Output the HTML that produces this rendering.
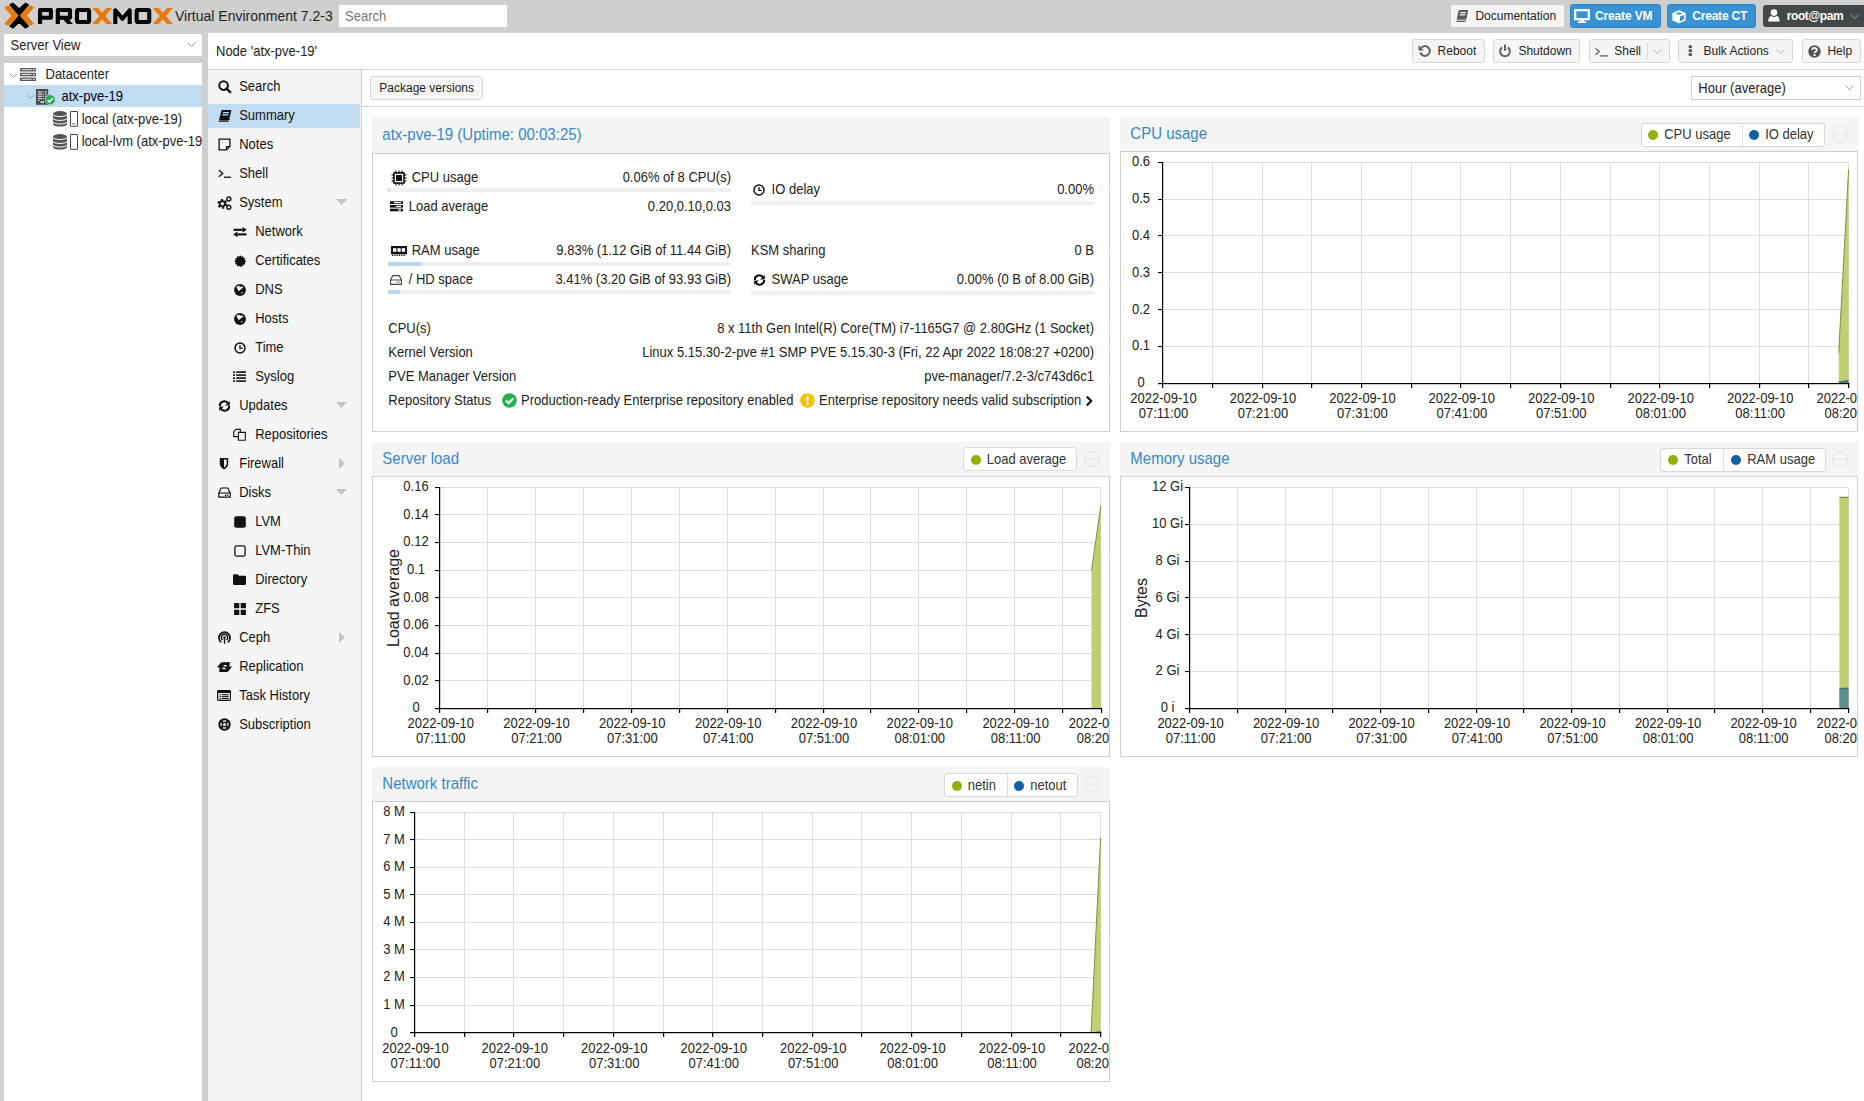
<!DOCTYPE html><html><head><meta charset="utf-8"><style>
html,body{margin:0;padding:0;width:1864px;height:1101px;overflow:hidden;background:#cfcfcf;font-family:"Liberation Sans", sans-serif}
.t{position:absolute;white-space:nowrap;line-height:20px;height:20px}
.r{position:absolute;box-sizing:border-box}
svg.r{overflow:visible}
</style></head><body>
<svg class="r" style="left:0px;top:0px;" width="180" height="34" viewBox="0 0 180 34"><defs><clipPath id="lclip"><rect x="0" y="8" width="180" height="16"/></clipPath></defs><g fill="#e87a0c" stroke="#e87a0c" stroke-width="1.2" stroke-linejoin="round"><polygon points="5.2,7.6 8.5,6.0 18.0,15.6 8.5,25.2 5.2,23.6 12.2,15.6"/><polygon points="33.2,7.6 29.9,6.0 20.4,15.6 29.9,25.2 33.2,23.6 26.2,15.6"/></g><g fill="#000" stroke="#000" stroke-width="1.3" stroke-linejoin="round"><polygon points="10.1,4.9 12.9,3.3 19.2,9.0 25.5,3.3 28.3,4.9 19.2,15.2"/><polygon points="10.1,26.3 12.9,27.9 19.2,22.2 25.5,27.9 28.3,26.3 19.2,16.0"/></g><g fill="none" stroke="#000" stroke-width="4.1" stroke-linejoin="round" clip-path="url(#lclip)"><path d="M40.1,25 V10 H50.9 V17.8 H40.1"/><path d="M57.8,25 V10 H70 V17.8 H57.8 M64.5,17.8 L71.5,25.5"/><rect x="77" y="10" width="12.1" height="12" rx="1.5"/><path d="M115.3,25 V10.2 L122.5,18.8 L129.7,10.2 V25"/><rect x="136.7" y="10" width="12.5" height="12" rx="1.5"/></g><g stroke="#e87a0c" stroke-width="4.4" clip-path="url(#lclip)"><path d="M94.2,7 L110.2,25 M110.2,7 L94.2,25"/><path d="M154.7,7 L171,25 M171,7 L154.7,25"/></g></svg>
<div class="t" style="left:175.00px;top:6.20px;font-size:14px;color:#222;font-weight:normal;transform:scaleY(1.05);">Virtual Environment 7.2-3</div>
<div class="r" style="left:339px;top:5px;width:168px;height:22px;background:#fff;"></div>
<div class="t" style="left:345.00px;top:6.75px;font-size:13px;color:#777;font-weight:normal;transform:scaleY(1.09);">Search</div>
<div class="r" style="left:1451px;top:5px;width:113px;height:22px;background:#f5f5f5;border-radius:2px;"></div>
<svg class="r" style="left:1455px;top:9px;" width="14" height="14" viewBox="0 0 14 14"><g transform="skewX(-12) translate(2.5,0)"><rect x="1.5" y="1" width="9.5" height="12" rx="1" fill="#5a5a5a"/><rect x="3.5" y="3" width="5.5" height="1.3" fill="#f5f5f5"/><rect x="3.5" y="5.2" width="5.5" height="1.3" fill="#f5f5f5"/><path d="M1.5,11.2 H11.6" stroke="#f5f5f5" stroke-width="0.9"/></g></svg>
<div class="t" style="left:1475.40px;top:6.00px;font-size:12px;color:#222;font-weight:normal;">Documentation</div>
<div class="r" style="left:1570px;top:4px;width:91px;height:24px;background:#3892d4;border-radius:3px;border:1px solid #2f86c9;"></div>
<svg class="r" style="left:1574px;top:9px;" width="16" height="14" viewBox="0 0 16 14"><rect x="1.2" y="1.2" width="13.6" height="9" fill="none" stroke="#fff" stroke-width="2.2"/><rect x="6" y="11" width="4" height="1.6" fill="#fff"/><rect x="4" y="12.3" width="8" height="1.6" fill="#fff"/></svg>
<div class="t" style="left:1595.00px;top:6.00px;font-size:12px;color:#fff;font-weight:bold;letter-spacing:-0.15px;">Create VM</div>
<div class="r" style="left:1667px;top:4px;width:89px;height:24px;background:#3892d4;border-radius:3px;border:1px solid #2f86c9;"></div>
<svg class="r" style="left:1671.5px;top:9.8px;" width="14" height="14" viewBox="0 0 14 14"><polygon points="7,0.2 13.6,2.9 13.6,10.4 7,13.2 0.4,10.4 0.4,2.9" fill="#fff"/><polygon points="6.9,2.2 10.6,3.5 6.9,4.8 3.2,3.5" fill="#3892d4"/><polygon points="7.9,6.5 12.1,4.9 12.1,9.5 7.9,11.2" fill="#3892d4"/></svg>
<div class="t" style="left:1692.30px;top:6.00px;font-size:12px;color:#fff;font-weight:bold;letter-spacing:-0.22px;">Create CT</div>
<div class="r" style="left:1763px;top:5px;width:101px;height:22px;background:#42474a;border-radius:3px 0 0 3px;"></div>
<svg class="r" style="left:1768px;top:9px;" width="12" height="13" viewBox="0 0 12 13"><circle cx="6" cy="3.6" r="3.3" fill="#fff"/><path d="M0.3,12.6 C0.3,8.2 2.2,7.3 3.4,7.1 C4.2,7.7 5,8 6,8 C7,8 7.8,7.7 8.6,7.1 C9.8,7.3 11.7,8.2 11.7,12.6 Z" fill="#fff"/></svg>
<div class="t" style="left:1786.70px;top:6.00px;font-size:12px;color:#fff;font-weight:bold;letter-spacing:-0.4px;">root@pam</div>
<svg class="r" style="left:1850px;top:14px;" width="9" height="5" viewBox="0 0 9 5"><path d="M0.5,0.5 L4.5,4.5 L8.5,0.5" fill="none" stroke="#a8a8a8" stroke-width="0.9"/></svg>
<div class="r" style="left:208px;top:33px;width:1656px;height:37px;background:#fff;border-bottom:1px solid #cfcfcf;"></div>
<div class="t" style="left:216.00px;top:41.75px;font-size:13px;color:#222;font-weight:normal;transform:scaleY(1.09);">Node 'atx-pve-19'</div>
<div class="r" style="left:1412px;top:39px;width:73px;height:24px;background:#f5f5f5;border:1px solid #d8d8d8;border-radius:3px;"></div>
<svg class="r" style="left:1418.2px;top:44.2px;" width="13" height="13" viewBox="0 0 13 13"><path d="M2.6,4.6 A4.9,4.9 0 1 1 2.2,8.4" fill="none" stroke="#606060" stroke-width="2"/><path d="M0.4,1.2 L0.6,6.6 L5.9,6.4 Z" fill="#606060"/></svg>
<div class="t" style="left:1437.60px;top:41.00px;font-size:12px;color:#1e1e1e;font-weight:normal;">Reboot</div>
<div class="r" style="left:1493px;top:39px;width:87px;height:24px;background:#f5f5f5;border:1px solid #d8d8d8;border-radius:3px;"></div>
<svg class="r" style="left:1499px;top:44.2px;" width="12" height="13" viewBox="0 0 12 13"><path d="M3.2,3.4 A4.9,4.9 0 1 0 8.8,3.4" fill="none" stroke="#606060" stroke-width="2"/><path d="M6,0.5 V6.8" stroke="#606060" stroke-width="2"/></svg>
<div class="t" style="left:1518.40px;top:41.00px;font-size:12px;color:#1e1e1e;font-weight:normal;">Shutdown</div>
<div class="r" style="left:1589px;top:39px;width:81px;height:24px;background:#f5f5f5;border:1px solid #d8d8d8;border-radius:3px;"></div>
<svg class="r" style="left:1594.5px;top:46px;" width="14" height="11" viewBox="0 0 14 11"><path d="M0.4,2.4 L4.2,5.6 L0.4,8.8" fill="none" stroke="#555" stroke-width="1.2"/><path d="M4.8,9.9 H13" stroke="#555" stroke-width="1.2"/></svg>
<div class="t" style="left:1614.30px;top:41.00px;font-size:12px;color:#1e1e1e;font-weight:normal;">Shell</div>
<div class="r" style="left:1647px;top:43px;width:1px;height:16px;background:#dcdcdc;"></div>
<svg class="r" style="left:1653px;top:49px;" width="9" height="5" viewBox="0 0 9 5"><path d="M0.5,0.5 L4.5,4.5 L8.5,0.5" fill="none" stroke="#b0b0b0" stroke-width="0.9"/></svg>
<div class="r" style="left:1678px;top:39px;width:115px;height:24px;background:#f5f5f5;border:1px solid #d8d8d8;border-radius:3px;"></div>
<svg class="r" style="left:1687.5px;top:45px;" width="5" height="12" viewBox="0 0 5 12"><rect x="0.7" y="0.4" width="3.2" height="2.8" fill="#555"/><rect x="0.7" y="4.3" width="3.2" height="2.8" fill="#555"/><rect x="0.7" y="8.2" width="3.2" height="2.8" fill="#555"/></svg>
<div class="t" style="left:1703.50px;top:41.00px;font-size:12px;color:#1e1e1e;font-weight:normal;">Bulk Actions</div>
<svg class="r" style="left:1776px;top:49px;" width="9" height="5" viewBox="0 0 9 5"><path d="M0.5,0.5 L4.5,4.5 L8.5,0.5" fill="none" stroke="#b0b0b0" stroke-width="0.9"/></svg>
<div class="r" style="left:1802px;top:39px;width:59px;height:24px;background:#f5f5f5;border:1px solid #d8d8d8;border-radius:3px;"></div>
<svg class="r" style="left:1807.5px;top:44.8px;" width="13" height="13" viewBox="0 0 13 13"><circle cx="6.5" cy="6.5" r="6.2" fill="#555"/><path d="M4.3,5 C4.3,2.3 8.8,2.3 8.8,4.9 C8.8,6.5 6.6,6.6 6.6,8" fill="none" stroke="#fff" stroke-width="1.8"/><rect x="5.6" y="9.1" width="2" height="1.9" fill="#fff"/></svg>
<div class="t" style="left:1827.40px;top:41.00px;font-size:12px;color:#1e1e1e;font-weight:normal;">Help</div>
<div class="r" style="left:4px;top:34px;width:198px;height:22px;background:#fff;"></div>
<div class="t" style="left:10.50px;top:35.55px;font-size:13px;color:#222;font-weight:normal;transform:scaleY(1.09);">Server View</div>
<svg class="r" style="left:186.5px;top:42px;" width="9" height="5" viewBox="0 0 9 5"><path d="M0.5,0.5 L4.5,4.5 L8.5,0.5" fill="none" stroke="#8a8a8a" stroke-width="0.9"/></svg>
<div class="r" style="left:4px;top:63px;width:198px;height:1038px;background:#fff;"></div>
<div class="r" style="left:4px;top:85px;width:198px;height:22px;background:#c2ddf2;"></div>
<svg class="r" style="left:9px;top:72.5px;" width="9" height="5" viewBox="0 0 9 5"><path d="M0.5,0.5 L4.5,4.5 L8.5,0.5" fill="none" stroke="#a0a0a0" stroke-width="0.9"/></svg>
<svg class="r" style="left:25.5px;top:94px;" width="9" height="5" viewBox="0 0 9 5"><path d="M0.5,0.5 L4.5,4.5 L8.5,0.5" fill="none" stroke="#8a9aa8" stroke-width="0.9"/></svg>
<svg class="r" style="left:20px;top:68px;" width="16" height="13" viewBox="0 0 16 13"><rect x="0" y="0" width="16" height="3.4" rx="0.6" fill="#5a5a5a"/><rect x="1.6" y="1.1" width="10" height="1.1" fill="#ddd"/><rect x="13" y="1.0" width="1.6" height="1.3" fill="#eee"/><rect x="0" y="4.8" width="16" height="3.4" rx="0.6" fill="#5a5a5a"/><rect x="1.6" y="5.9" width="10" height="1.1" fill="#ddd"/><rect x="13" y="5.8" width="1.6" height="1.3" fill="#eee"/><rect x="0" y="9.6" width="16" height="3.4" rx="0.6" fill="#5a5a5a"/><rect x="1.6" y="10.7" width="10" height="1.1" fill="#ddd"/><rect x="13" y="10.6" width="1.6" height="1.3" fill="#eee"/></svg>
<div class="t" style="left:45.50px;top:65.15px;font-size:13px;color:#222;font-weight:normal;transform:scaleY(1.09);">Datacenter</div>
<svg class="r" style="left:36px;top:89px;" width="21" height="17" viewBox="0 0 21 17"><rect x="0" y="0" width="12.2" height="15.8" fill="#4a4a4a"/><rect x="1.9" y="2.4" width="4" height="1.2" fill="#d5dbe0"/><rect x="6.6" y="2.4" width="1.3" height="1.2" fill="#d5dbe0"/><rect x="9" y="2.4" width="1.8" height="1.2" fill="#d5dbe0"/><rect x="1.9" y="4.6" width="4" height="1.2" fill="#d5dbe0"/><rect x="6.6" y="4.6" width="1.3" height="1.2" fill="#d5dbe0"/><rect x="9" y="4.6" width="1.8" height="1.2" fill="#d5dbe0"/><rect x="1.9" y="6.7" width="4" height="1.2" fill="#d5dbe0"/><rect x="6.6" y="6.7" width="1.3" height="1.2" fill="#d5dbe0"/><rect x="9" y="6.7" width="1.8" height="1.2" fill="#d5dbe0"/><rect x="1.9" y="8.9" width="4" height="1.2" fill="#d5dbe0"/><rect x="6.6" y="8.9" width="1.3" height="1.2" fill="#d5dbe0"/><rect x="9" y="8.9" width="1.8" height="1.2" fill="#d5dbe0"/><rect x="1.9" y="10.9" width="1.5" height="1.2" fill="#d5dbe0"/><rect x="4.6" y="12.3" width="3.4" height="1.7" fill="#e0e6ea"/><circle cx="14.2" cy="10.8" r="5.1" fill="#21b24b" stroke="#c2ddf2" stroke-width="0.7"/><path d="M11.7,11 L13.6,12.8 L16.8,9.3" fill="none" stroke="#fff" stroke-width="1.6"/></svg>
<div class="t" style="left:61.50px;top:86.55px;font-size:13px;color:#001;font-weight:normal;transform:scaleY(1.09);">atx-pve-19</div>
<svg class="r" style="left:53.2px;top:111.2px;" width="14" height="16" viewBox="0 0 14 16"><path d="M0,2.8 V13 C0,16.4 14,16.4 14,13 V2.8 Z" fill="#555"/><ellipse cx="7" cy="2.8" rx="7" ry="2.7" fill="#555"/><path d="M0,3.4 C0,6.2 14,6.2 14,3.4 M0,7.3 C0,10.1 14,10.1 14,7.3 M0,10.9 C0,13.7 14,13.7 14,10.9" fill="none" stroke="#fff" stroke-width="1.0"/></svg>
<svg class="r" style="left:53.2px;top:133.5px;" width="14" height="16" viewBox="0 0 14 16"><path d="M0,2.8 V13 C0,16.4 14,16.4 14,13 V2.8 Z" fill="#555"/><ellipse cx="7" cy="2.8" rx="7" ry="2.7" fill="#555"/><path d="M0,3.4 C0,6.2 14,6.2 14,3.4 M0,7.3 C0,10.1 14,10.1 14,7.3 M0,10.9 C0,13.7 14,13.7 14,10.9" fill="none" stroke="#fff" stroke-width="1.0"/></svg>
<svg class="r" style="left:70px;top:111.3px;" width="8" height="16" viewBox="0 0 8 16"><rect x="0.5" y="0.5" width="7" height="14.8" rx="0.4" fill="none" stroke="#444" stroke-width="1"/><path d="M2.4,12.9 H5.2" stroke="#444" stroke-width="0.9"/></svg>
<svg class="r" style="left:70px;top:133.6px;" width="8" height="16" viewBox="0 0 8 16"><rect x="0.5" y="0.5" width="7" height="14.8" rx="0.4" fill="none" stroke="#444" stroke-width="1"/></svg>
<div class="t" style="left:81.70px;top:110.25px;font-size:13px;color:#222;font-weight:normal;transform:scaleY(1.09);">local (atx-pve-19)</div>
<div class="r" style="left:81.7px;top:132.4px;width:120px;height:20px;overflow:hidden"><div class="t" style="left:0;top:0;font-size:13px;color:#222;transform:scaleY(1.09)">local-lvm (atx-pve-19)</div></div>
<div class="r" style="left:208px;top:70px;width:154px;height:1031px;background:#f5f5f5;border-right:1px solid #cfcfcf;"></div>
<div class="r" style="left:208px;top:104px;width:152px;height:24px;background:#c2ddf2;"></div>
<svg class="r" style="left:217.5px;top:80.3px;" width="13" height="13" viewBox="0 0 13 13"><circle cx="5.6" cy="5.6" r="4.3" fill="none" stroke="#111" stroke-width="2"/><path d="M8.6,8.6 L12.2,12.2" stroke="#111" stroke-width="2.4" stroke-linecap="round"/></svg>
<div class="t" style="left:239.20px;top:76.85px;font-size:13px;color:#111;font-weight:normal;transform:scaleY(1.09);">Search</div>
<svg class="r" style="left:217.5px;top:109.3px;" width="13" height="13" viewBox="0 0 13 13"><g transform="skewX(-14) translate(2.8,0)"><rect x="1" y="1" width="10" height="10.5" rx="0.8" fill="#111"/><rect x="3" y="3" width="6" height="1.3" fill="#c2ddf2"/><rect x="3" y="5.2" width="6" height="1.3" fill="#c2ddf2"/><path d="M1,10.4 H11.5 M1,12.2 H11" stroke="#111" stroke-width="0.9"/></g></svg>
<div class="t" style="left:239.20px;top:105.85px;font-size:13px;color:#111;font-weight:normal;transform:scaleY(1.09);">Summary</div>
<svg class="r" style="left:217.5px;top:138.3px;" width="13" height="13" viewBox="0 0 13 13"><path d="M1.1,1.1 H11.9 V8.4 L8.4,11.9 H1.1 Z" fill="none" stroke="#111" stroke-width="1.3"/><path d="M8.4,11.9 V8.6 H11.9" fill="none" stroke="#111" stroke-width="1.1"/></svg>
<div class="t" style="left:239.20px;top:134.85px;font-size:13px;color:#111;font-weight:normal;transform:scaleY(1.09);">Notes</div>
<svg class="r" style="left:217.5px;top:169.3px;" width="13" height="9" viewBox="0 0 13 9"><path d="M0.8,1 L4.8,4.4 L0.8,7.8" fill="none" stroke="#111" stroke-width="1.3"/><path d="M6,8.2 H13" stroke="#111" stroke-width="1.3"/></svg>
<div class="t" style="left:239.20px;top:163.85px;font-size:13px;color:#111;font-weight:normal;transform:scaleY(1.09);">Shell</div>
<svg class="r" style="left:216.5px;top:195.8px;" width="15" height="14" viewBox="0 0 15 14"><circle cx="5.3" cy="7.8" r="3.6" fill="none" stroke="#111" stroke-width="2.6" stroke-dasharray="1.9,1.9"/><circle cx="5.3" cy="7.8" r="2.6" fill="none" stroke="#111" stroke-width="1.8"/><circle cx="11.8" cy="3" r="2" fill="none" stroke="#111" stroke-width="1.4"/><circle cx="11.8" cy="11.3" r="2" fill="none" stroke="#111" stroke-width="1.4"/></svg>
<div class="t" style="left:239.20px;top:192.85px;font-size:13px;color:#111;font-weight:normal;transform:scaleY(1.09);">System</div>
<svg class="r" style="left:232.5px;top:226.8px;" width="14" height="10" viewBox="0 0 14 10"><path d="M0.5,2.8 H10.5" stroke="#111" stroke-width="2.1"/><path d="M9.6,0 L13.8,2.8 L9.6,5.6 Z" fill="#111"/><path d="M3.5,7.4 H13.5" stroke="#111" stroke-width="2.1"/><path d="M4.4,4.6 L0.2,7.4 L4.4,10.2 Z" fill="#111"/></svg>
<div class="t" style="left:255.20px;top:221.85px;font-size:13px;color:#111;font-weight:normal;transform:scaleY(1.09);">Network</div>
<svg class="r" style="left:233.5px;top:254.8px;" width="12" height="12" viewBox="0 0 12 12"><polygon points="6.20,0.20 7.39,1.76 9.20,1.00 9.45,2.95 11.40,3.20 10.64,5.01 12.20,6.20 10.64,7.39 11.40,9.20 9.45,9.45 9.20,11.40 7.39,10.64 6.20,12.20 5.01,10.64 3.20,11.40 2.95,9.45 1.00,9.20 1.76,7.39 0.20,6.20 1.76,5.01 1.00,3.20 2.95,2.95 3.20,1.00 5.01,1.76" fill="#111"/></svg>
<div class="t" style="left:255.20px;top:250.85px;font-size:13px;color:#111;font-weight:normal;transform:scaleY(1.09);">Certificates</div>
<svg class="r" style="left:233.5px;top:283.8px;" width="12" height="12" viewBox="0 0 12 12"><circle cx="6" cy="6" r="5.9" fill="#111"/><polygon points="2.2,2.8 5.0,1.5 6.4,2.3 9.7,3.1 4.8,7.3" fill="#f5f5f5"/><circle cx="6.2" cy="2.0" r="0.75" fill="#111"/><polygon points="6.4,9.3 9.0,7.8 8.3,9.6" fill="#f5f5f5"/></svg>
<div class="t" style="left:255.20px;top:279.85px;font-size:13px;color:#111;font-weight:normal;transform:scaleY(1.09);">DNS</div>
<svg class="r" style="left:233.5px;top:312.8px;" width="12" height="12" viewBox="0 0 12 12"><circle cx="6" cy="6" r="5.9" fill="#111"/><polygon points="2.2,2.8 5.0,1.5 6.4,2.3 9.7,3.1 4.8,7.3" fill="#f5f5f5"/><circle cx="6.2" cy="2.0" r="0.75" fill="#111"/><polygon points="6.4,9.3 9.0,7.8 8.3,9.6" fill="#f5f5f5"/></svg>
<div class="t" style="left:255.20px;top:308.85px;font-size:13px;color:#111;font-weight:normal;transform:scaleY(1.09);">Hosts</div>
<svg class="r" style="left:233.5px;top:341.8px;" width="12" height="12" viewBox="0 0 12 12"><circle cx="6" cy="6" r="5" fill="none" stroke="#111" stroke-width="1.5"/><path d="M6,3 V6.4 H8.6" fill="none" stroke="#111" stroke-width="1.3"/></svg>
<div class="t" style="left:255.20px;top:337.85px;font-size:13px;color:#111;font-weight:normal;transform:scaleY(1.09);">Time</div>
<svg class="r" style="left:233.0px;top:371.3px;" width="13" height="11" viewBox="0 0 13 11"><rect x="0" y="0.3" width="2" height="1.6" fill="#111"/><rect x="3.2" y="0.3" width="9.8" height="1.6" fill="#111"/><rect x="0" y="3.3" width="2" height="1.6" fill="#111"/><rect x="3.2" y="3.3" width="9.8" height="1.6" fill="#111"/><rect x="0" y="6.3" width="2" height="1.6" fill="#111"/><rect x="3.2" y="6.3" width="9.8" height="1.6" fill="#111"/><rect x="0" y="9.3" width="2" height="1.6" fill="#111"/><rect x="3.2" y="9.3" width="9.8" height="1.6" fill="#111"/></svg>
<div class="t" style="left:255.20px;top:366.85px;font-size:13px;color:#111;font-weight:normal;transform:scaleY(1.09);">Syslog</div>
<svg class="r" style="left:217.5px;top:399.8px;" width="13" height="12" viewBox="0 0 13 12"><path d="M1.8,6 A4.5,4.5 0 0 1 10.2,3.6" fill="none" stroke="#111" stroke-width="2"/><path d="M11.8,1 V5.6 H7.2 Z" fill="#111"/><path d="M11.2,6 A4.5,4.5 0 0 1 2.8,8.4" fill="none" stroke="#111" stroke-width="2"/><path d="M1.2,11 V6.4 H5.8 Z" fill="#111"/></svg>
<div class="t" style="left:239.20px;top:395.85px;font-size:13px;color:#111;font-weight:normal;transform:scaleY(1.09);">Updates</div>
<svg class="r" style="left:233.0px;top:428.3px;" width="13" height="13" viewBox="0 0 13 13"><path d="M0.7,3.7 L3,1.4 H7.3 V8.6 H0.7 Z" fill="none" stroke="#111" stroke-width="1.1"/><path d="M5.4,4.4 H12.3 V12.3 H5.4 Z" fill="#f5f5f5" stroke="#111" stroke-width="1.1"/></svg>
<div class="t" style="left:255.20px;top:424.85px;font-size:13px;color:#111;font-weight:normal;transform:scaleY(1.09);">Repositories</div>
<svg class="r" style="left:219.0px;top:457.3px;" width="10" height="13" viewBox="0 0 10 13"><path d="M0.8,1 H9.2 V6.5 C9.2,9.5 7,11.3 5,12.4 C3,11.3 0.8,9.5 0.8,6.5 Z" fill="#111"/><path d="M5,2.6 H7.6 V6.5 C7.6,8.4 6.4,9.6 5,10.4 Z" fill="#f5f5f5"/></svg>
<div class="t" style="left:239.20px;top:453.85px;font-size:13px;color:#111;font-weight:normal;transform:scaleY(1.09);">Firewall</div>
<svg class="r" style="left:217.5px;top:487.3px;" width="13" height="11" viewBox="0 0 13 11"><path d="M0.8,6 L3.2,1 H9.8 L12.2,6 V10.2 H0.8 Z" fill="none" stroke="#111" stroke-width="1.2"/><path d="M0.8,6 H12.2" stroke="#111" stroke-width="1.1"/><circle cx="9.6" cy="8.2" r="0.8" fill="#111"/><circle cx="7.6" cy="8.2" r="0.8" fill="#111"/></svg>
<div class="t" style="left:239.20px;top:482.85px;font-size:13px;color:#111;font-weight:normal;transform:scaleY(1.09);">Disks</div>
<svg class="r" style="left:233.5px;top:515.8px;" width="12" height="12" viewBox="0 0 12 12"><rect x="0.2" y="0.2" width="11.6" height="11.6" rx="1.8" fill="#111"/></svg>
<div class="t" style="left:255.20px;top:511.85px;font-size:13px;color:#111;font-weight:normal;transform:scaleY(1.09);">LVM</div>
<svg class="r" style="left:233.5px;top:544.8px;" width="12" height="12" viewBox="0 0 12 12"><rect x="0.9" y="0.9" width="10.2" height="10.2" rx="1.6" fill="none" stroke="#111" stroke-width="1.3"/></svg>
<div class="t" style="left:255.20px;top:540.85px;font-size:13px;color:#111;font-weight:normal;transform:scaleY(1.09);">LVM-Thin</div>
<svg class="r" style="left:233.0px;top:574.3px;" width="13" height="11" viewBox="0 0 13 11"><path d="M0,1.5 C0,0.8 0.5,0.3 1.2,0.3 H4.6 L6,1.8 H11.8 C12.5,1.8 13,2.3 13,3 V9.8 C13,10.5 12.5,11 11.8,11 H1.2 C0.5,11 0,10.5 0,9.8 Z" fill="#111"/></svg>
<div class="t" style="left:255.20px;top:569.85px;font-size:13px;color:#111;font-weight:normal;transform:scaleY(1.09);">Directory</div>
<svg class="r" style="left:233.5px;top:602.8px;" width="12" height="12" viewBox="0 0 12 12"><rect x="0" y="0" width="5.3" height="5.3" rx="0.6" fill="#111"/><rect x="6.7" y="0" width="5.3" height="5.3" rx="0.6" fill="#111"/><rect x="0" y="6.7" width="5.3" height="5.3" rx="0.6" fill="#111"/><rect x="6.7" y="6.7" width="5.3" height="5.3" rx="0.6" fill="#111"/></svg>
<div class="t" style="left:255.20px;top:598.85px;font-size:13px;color:#111;font-weight:normal;transform:scaleY(1.09);">ZFS</div>
<svg class="r" style="left:217.5px;top:631.3px;" width="13" height="13" viewBox="0 0 13 13"><path d="M3.3,11.4 A5.6,5.6 0 1 1 9.7,11.4" fill="none" stroke="#111" stroke-width="1.7"/><path d="M4.6,9 A3.2,3.2 0 1 1 8.4,9" fill="none" stroke="#111" stroke-width="1.5"/><circle cx="6.5" cy="6.6" r="1.3" fill="#111"/><path d="M6.5,7.6 V12.8" stroke="#111" stroke-width="1.3"/></svg>
<div class="t" style="left:239.20px;top:627.85px;font-size:13px;color:#111;font-weight:normal;transform:scaleY(1.09);">Ceph</div>
<svg class="r" style="left:216.5px;top:661.8px;" width="15" height="10" viewBox="0 0 15 10"><polygon points="0,5.5 4,0.2 8,5.5" fill="#111"/><rect x="2.6" y="5" width="2.8" height="5" fill="#111"/><rect x="2.6" y="7.2" width="8" height="2.8" fill="#111"/><rect x="5" y="0.2" width="7.5" height="2.8" fill="#111"/><rect x="9.6" y="0.2" width="2.8" height="4.6" fill="#111"/><polygon points="7,4.4 11,9.8 15,4.4" fill="#111"/></svg>
<div class="t" style="left:239.20px;top:656.85px;font-size:13px;color:#111;font-weight:normal;transform:scaleY(1.09);">Replication</div>
<svg class="r" style="left:217.0px;top:690.3px;" width="14" height="11" viewBox="0 0 14 11"><rect x="0.6" y="0.6" width="12.8" height="9.8" rx="0.8" fill="none" stroke="#111" stroke-width="1.2"/><rect x="0.6" y="0.6" width="12.8" height="2.4" fill="#111"/><rect x="2.4" y="4.2" width="1.4" height="1.1" fill="#111"/><rect x="4.6" y="4.2" width="7" height="1.1" fill="#111"/><rect x="2.4" y="6.1" width="1.4" height="1.1" fill="#111"/><rect x="4.6" y="6.1" width="7" height="1.1" fill="#111"/><rect x="2.4" y="8" width="1.4" height="1.1" fill="#111"/><rect x="4.6" y="8" width="7" height="1.1" fill="#111"/></svg>
<div class="t" style="left:239.20px;top:685.85px;font-size:13px;color:#111;font-weight:normal;transform:scaleY(1.09);">Task History</div>
<svg class="r" style="left:217.5px;top:718.3px;" width="13" height="13" viewBox="0 0 13 13"><circle cx="6.5" cy="6.5" r="5.2" fill="none" stroke="#111" stroke-width="2"/><circle cx="6.5" cy="6.5" r="2.2" fill="none" stroke="#111" stroke-width="1.2"/><path d="M2.8,2.8 L4.9,4.9 M10.2,2.8 L8.1,4.9 M2.8,10.2 L4.9,8.1 M10.2,10.2 L8.1,8.1" stroke="#111" stroke-width="2.2"/></svg>
<div class="t" style="left:239.20px;top:714.85px;font-size:13px;color:#111;font-weight:normal;transform:scaleY(1.09);">Subscription</div>
<svg class="r" style="left:336px;top:199.3px;" width="11" height="6" viewBox="0 0 11 6"><path d="M0,0 H11 L5.5,6 Z" fill="#c4c4c4"/></svg>
<svg class="r" style="left:336px;top:402.3px;" width="11" height="6" viewBox="0 0 11 6"><path d="M0,0 H11 L5.5,6 Z" fill="#c4c4c4"/></svg>
<svg class="r" style="left:336px;top:489.3px;" width="11" height="6" viewBox="0 0 11 6"><path d="M0,0 H11 L5.5,6 Z" fill="#c4c4c4"/></svg>
<svg class="r" style="left:339px;top:457.8px;" width="6" height="11" viewBox="0 0 6 11"><path d="M0,0 V11 L6,5.5 Z" fill="#c4c4c4"/></svg>
<svg class="r" style="left:339px;top:631.8px;" width="6" height="11" viewBox="0 0 6 11"><path d="M0,0 V11 L6,5.5 Z" fill="#c4c4c4"/></svg>
<div class="r" style="left:362px;top:70px;width:1502px;height:1031px;background:#fff;"></div>
<div class="r" style="left:362px;top:106px;width:1502px;height:1px;background:#cfcfcf;"></div>
<div class="r" style="left:370px;top:76px;width:113px;height:24px;background:#f5f5f5;border:1px solid #d8d8d8;border-radius:3px;"></div>
<div class="t" style="left:379.30px;top:77.80px;font-size:12px;color:#1e1e1e;font-weight:normal;">Package versions</div>
<div class="r" style="left:1691px;top:76px;width:170px;height:24px;background:#fff;border:1px solid #d0d0d0;"></div>
<div class="t" style="left:1698.30px;top:79.35px;font-size:13px;color:#222;font-weight:normal;transform:scaleY(1.09);">Hour (average)</div>
<svg class="r" style="left:1845px;top:84.8px;" width="9" height="5" viewBox="0 0 9 5"><path d="M0.5,0.5 L4.5,4.5 L8.5,0.5" fill="none" stroke="#9a9a9a" stroke-width="0.9"/></svg>
<div class="r" style="left:372px;top:117px;width:738px;height:36px;background:#f5f5f5;"></div>
<div class="r" style="left:372px;top:153px;width:738px;height:279px;background:#fff;border:1px solid #cfcfcf;"></div>
<div class="t" style="left:382.30px;top:124.50px;font-size:15px;color:#3588c8;font-weight:normal;transform:scaleY(1.06);">atx-pve-19 (Uptime: 00:03:25)</div>
<svg class="r" style="left:390.5px;top:169.5px;" width="16" height="16" viewBox="0 0 16 16"><rect x="3" y="3" width="10" height="10" fill="none" stroke="#111" stroke-width="1.6"/><rect x="5" y="5" width="6" height="6" fill="#111"/><rect x="4.4" y="0.6" width="1.2" height="2.4" fill="#111"/><rect x="4.4" y="13" width="1.2" height="2.4" fill="#111"/><rect x="0.6" y="4.4" width="2.4" height="1.2" fill="#111"/><rect x="13" y="4.4" width="2.4" height="1.2" fill="#111"/><rect x="7.4" y="0.6" width="1.2" height="2.4" fill="#111"/><rect x="7.4" y="13" width="1.2" height="2.4" fill="#111"/><rect x="0.6" y="7.4" width="2.4" height="1.2" fill="#111"/><rect x="13" y="7.4" width="2.4" height="1.2" fill="#111"/><rect x="10.4" y="0.6" width="1.2" height="2.4" fill="#111"/><rect x="10.4" y="13" width="1.2" height="2.4" fill="#111"/><rect x="0.6" y="10.4" width="2.4" height="1.2" fill="#111"/><rect x="13" y="10.4" width="2.4" height="1.2" fill="#111"/></svg>
<div class="t" style="left:411.70px;top:168.15px;font-size:13px;color:#222;font-weight:normal;transform:scaleY(1.09);">CPU usage</div>
<div class="t" style="left:-269.00px;width:1000px;text-align:right;top:168.15px;font-size:13px;color:#222;font-weight:normal;transform:scaleY(1.09);">0.06% of 8 CPU(s)</div>
<div class="r" style="left:388px;top:188px;width:343px;height:4px;background:#efefef;"></div>
<div class="r" style="left:388px;top:188px;width:1px;height:4px;background:#c9c9c9;"></div>
<svg class="r" style="left:389.5px;top:200.5px;" width="14" height="11" viewBox="0 0 14 11"><rect x="0" y="0.3" width="13" height="2.6" fill="#111"/><rect x="0" y="4" width="13" height="2.6" fill="#111"/><rect x="0" y="7.7" width="13" height="2.6" fill="#111"/><rect x="4" y="1" width="7" height="1.2" fill="#fff"/><rect x="6" y="4.7" width="5" height="1.2" fill="#fff"/><rect x="8" y="8.4" width="3" height="1.2" fill="#fff"/></svg>
<div class="t" style="left:408.70px;top:197.25px;font-size:13px;color:#222;font-weight:normal;transform:scaleY(1.09);">Load average</div>
<div class="t" style="left:-269.00px;width:1000px;text-align:right;top:197.25px;font-size:13px;color:#222;font-weight:normal;transform:scaleY(1.09);">0.20,0.10,0.03</div>
<svg class="r" style="left:390.5px;top:245.5px;" width="16" height="10" viewBox="0 0 16 10"><rect x="0" y="0" width="16" height="8.2" fill="#111"/><rect x="2" y="2.2" width="3.3" height="3.6" fill="#fff"/><rect x="6.4" y="2.2" width="3.3" height="3.6" fill="#fff"/><rect x="10.8" y="2.2" width="3.3" height="3.6" fill="#fff"/><path d="M1,9.2 H15" stroke="#111" stroke-width="1.4" stroke-dasharray="1.2,1.1"/></svg>
<div class="t" style="left:411.70px;top:241.15px;font-size:13px;color:#222;font-weight:normal;transform:scaleY(1.09);">RAM usage</div>
<div class="t" style="left:-269.00px;width:1000px;text-align:right;top:241.15px;font-size:13px;color:#222;font-weight:normal;transform:scaleY(1.09);">9.83% (1.12 GiB of 11.44 GiB)</div>
<div class="r" style="left:388px;top:261.5px;width:343px;height:4.0px;background:#efefef;"></div>
<div class="r" style="left:388px;top:261.5px;width:34px;height:4.0px;background:#bcd6ee;"></div>
<svg class="r" style="left:390px;top:274.5px;" width="12" height="10" viewBox="0 0 12 10"><path d="M0.6,5 L2.8,0.6 H9.2 L11.4,5 V9.4 H0.6 Z" fill="none" stroke="#444" stroke-width="1.1"/><path d="M0.6,5 H11.4" stroke="#444" stroke-width="1"/><circle cx="9" cy="7.2" r="0.65" fill="#444"/><circle cx="7.2" cy="7.2" r="0.65" fill="#444"/></svg>
<div class="t" style="left:408.70px;top:269.95px;font-size:13px;color:#222;font-weight:normal;transform:scaleY(1.09);">/ HD space</div>
<div class="t" style="left:-269.00px;width:1000px;text-align:right;top:269.95px;font-size:13px;color:#222;font-weight:normal;transform:scaleY(1.09);">3.41% (3.20 GiB of 93.93 GiB)</div>
<div class="r" style="left:388px;top:290.3px;width:343px;height:4.0px;background:#efefef;"></div>
<div class="r" style="left:388px;top:290.3px;width:12px;height:4.0px;background:#bcd6ee;"></div>
<svg class="r" style="left:753px;top:183.5px;" width="12" height="12" viewBox="0 0 12 12"><circle cx="6" cy="6" r="5" fill="none" stroke="#111" stroke-width="1.5"/><path d="M6,3 V6.4 H8.6" fill="none" stroke="#111" stroke-width="1.3"/></svg>
<div class="t" style="left:771.60px;top:179.85px;font-size:13px;color:#222;font-weight:normal;transform:scaleY(1.09);">IO delay</div>
<div class="t" style="left:94.00px;width:1000px;text-align:right;top:179.85px;font-size:13px;color:#222;font-weight:normal;transform:scaleY(1.09);">0.00%</div>
<div class="r" style="left:751px;top:200.6px;width:343px;height:4.0px;background:#efefef;"></div>
<div class="t" style="left:751.00px;top:241.05px;font-size:13px;color:#222;font-weight:normal;transform:scaleY(1.09);">KSM sharing</div>
<div class="t" style="left:94.00px;width:1000px;text-align:right;top:241.05px;font-size:13px;color:#222;font-weight:normal;transform:scaleY(1.09);">0 B</div>
<svg class="r" style="left:753px;top:273.5px;" width="13" height="12" viewBox="0 0 13 12"><path d="M1.8,6 A4.5,4.5 0 0 1 10.2,3.6" fill="none" stroke="#111" stroke-width="2"/><path d="M11.8,1 V5.6 H7.2 Z" fill="#111"/><path d="M11.2,6 A4.5,4.5 0 0 1 2.8,8.4" fill="none" stroke="#111" stroke-width="2"/><path d="M1.2,11 V6.4 H5.8 Z" fill="#111"/></svg>
<div class="t" style="left:771.60px;top:270.05px;font-size:13px;color:#222;font-weight:normal;transform:scaleY(1.09);">SWAP usage</div>
<div class="t" style="left:94.00px;width:1000px;text-align:right;top:270.05px;font-size:13px;color:#222;font-weight:normal;transform:scaleY(1.09);">0.00% (0 B of 8.00 GiB)</div>
<div class="r" style="left:751px;top:290.7px;width:343px;height:4.0px;background:#efefef;"></div>
<div class="t" style="left:388.30px;top:319.05px;font-size:13px;color:#222;font-weight:normal;transform:scaleY(1.09);">CPU(s)</div>
<div class="t" style="left:94.00px;width:1000px;text-align:right;top:319.05px;font-size:13px;color:#222;font-weight:normal;transform:scaleY(1.09);">8 x 11th Gen Intel(R) Core(TM) i7-1165G7 @ 2.80GHz (1 Socket)</div>
<div class="t" style="left:388.30px;top:343.15px;font-size:13px;color:#222;font-weight:normal;transform:scaleY(1.09);">Kernel Version</div>
<div class="t" style="left:94.00px;width:1000px;text-align:right;top:343.15px;font-size:13px;color:#222;font-weight:normal;transform:scaleY(1.09);">Linux 5.15.30-2-pve #1 SMP PVE 5.15.30-3 (Fri, 22 Apr 2022 18:08:27 +0200)</div>
<div class="t" style="left:388.30px;top:367.05px;font-size:13px;color:#222;font-weight:normal;transform:scaleY(1.09);">PVE Manager Version</div>
<div class="t" style="left:94.00px;width:1000px;text-align:right;top:367.05px;font-size:13px;color:#222;font-weight:normal;transform:scaleY(1.09);">pve-manager/7.2-3/c743d6c1</div>
<div class="t" style="left:388.30px;top:391.05px;font-size:13px;color:#222;font-weight:normal;transform:scaleY(1.09);">Repository Status</div>
<svg class="r" style="left:502px;top:393.3px;" width="15" height="15" viewBox="0 0 15 15"><circle cx="7.5" cy="7.5" r="7.3" fill="#21b24b"/><path d="M4,7.6 L6.6,10.2 L11.2,5.2" fill="none" stroke="#fff" stroke-width="2.1"/></svg>
<div class="t" style="left:521.00px;top:391.05px;font-size:13px;color:#222;font-weight:normal;transform:scaleY(1.09);">Production-ready Enterprise repository enabled</div>
<svg class="r" style="left:799.5px;top:393.3px;" width="15" height="15" viewBox="0 0 15 15"><circle cx="7.5" cy="7.5" r="7.3" fill="#f1c40f"/><rect x="6.5" y="3.2" width="2" height="5.6" fill="#fff"/><rect x="6.5" y="9.9" width="2" height="2" fill="#fff"/></svg>
<div class="t" style="left:819.00px;top:391.05px;font-size:13px;color:#222;font-weight:normal;transform:scaleY(1.09);">Enterprise repository needs valid subscription</div>
<svg class="r" style="left:1085px;top:394.5px;" width="8" height="12" viewBox="0 0 8 12"><path d="M1.8,1.5 L6.2,6 L1.8,10.5" fill="none" stroke="#111" stroke-width="2.2"/></svg>
<div class="r" style="left:1120px;top:117px;width:738px;height:34px;background:#f5f5f5;"></div>
<div class="r" style="left:1120px;top:151px;width:738px;height:281px;background:#fff;border:1px solid #cfcfcf;"></div>
<div class="t" style="left:1130.30px;top:123.50px;font-size:15px;color:#3588c8;font-weight:normal;transform:scaleY(1.06);">CPU usage</div>
<div class="r" style="left:1640.5px;top:122.5px;width:184.5px;height:24.0px;background:#fff;border:1px solid #d8d8d8;border-radius:3px;"></div>
<div class="r" style="left:1741.5px;top:123.5px;width:1.0px;height:22.0px;background:#dedede;"></div>
<svg class="r" style="left:1648px;top:130.2px;" width="10" height="10" viewBox="0 0 10 10"><circle cx="5" cy="5" r="5" fill="#94ae0a"/></svg>
<div class="t" style="left:1664.20px;top:125.25px;font-size:13px;color:#333;font-weight:normal;transform:scaleY(1.09);">CPU usage</div>
<svg class="r" style="left:1749px;top:130.2px;" width="10" height="10" viewBox="0 0 10 10"><circle cx="5" cy="5" r="5" fill="#115fa6"/></svg>
<div class="t" style="left:1765.20px;top:125.25px;font-size:13px;color:#333;font-weight:normal;transform:scaleY(1.09);">IO delay</div>
<svg class="r" style="left:1832px;top:126.19999999999999px;" width="16" height="16" viewBox="0 0 16 16"><circle cx="8" cy="8" r="7.4" fill="none" stroke="#dde6ee" stroke-width="1"/><path d="M1.5,8 H14.5" stroke="#dde6ee" stroke-width="1"/></svg>
<svg style="position:absolute;left:1121px;top:152px;overflow:hidden;font-family:'Liberation Sans', sans-serif" width="736" height="279"><rect x="41.30" y="10.00" width="686.30" height="1" fill="#dddddd"/><rect x="41.30" y="47.00" width="686.30" height="1" fill="#dddddd"/><rect x="41.30" y="83.00" width="686.30" height="1" fill="#dddddd"/><rect x="41.30" y="120.00" width="686.30" height="1" fill="#dddddd"/><rect x="41.30" y="157.00" width="686.30" height="1" fill="#dddddd"/><rect x="41.30" y="194.00" width="686.30" height="1" fill="#dddddd"/><rect x="91.00" y="10.00" width="1" height="221.00" fill="#dddddd"/><rect x="141.00" y="10.00" width="1" height="221.00" fill="#dddddd"/><rect x="190.00" y="10.00" width="1" height="221.00" fill="#dddddd"/><rect x="240.00" y="10.00" width="1" height="221.00" fill="#dddddd"/><rect x="290.00" y="10.00" width="1" height="221.00" fill="#dddddd"/><rect x="339.00" y="10.00" width="1" height="221.00" fill="#dddddd"/><rect x="389.00" y="10.00" width="1" height="221.00" fill="#dddddd"/><rect x="439.00" y="10.00" width="1" height="221.00" fill="#dddddd"/><rect x="489.00" y="10.00" width="1" height="221.00" fill="#dddddd"/><rect x="538.00" y="10.00" width="1" height="221.00" fill="#dddddd"/><rect x="588.00" y="10.00" width="1" height="221.00" fill="#dddddd"/><rect x="638.00" y="10.00" width="1" height="221.00" fill="#dddddd"/><rect x="687.00" y="10.00" width="1" height="221.00" fill="#dddddd"/><rect x="727.00" y="10.30" width="1" height="221.00" fill="#dddddd"/><polygon points="717.70,231.30 717.70,200.70 727.60,17.70 727.60,231.30" fill="#c0cf6f"/><polyline points="717.70,200.70 727.60,17.70" fill="none" stroke="#7f8f45" stroke-width="1"/><polygon points="717.70,231.30 717.70,229.60 727.60,227.80 727.60,231.30" fill="#4a7a80"/><rect x="41.00" y="10.00" width="1.2" height="222.00" fill="#000"/><rect x="37.00" y="231.00" width="691.30" height="1.2" fill="#000"/><rect x="37.00" y="10.00" width="4" height="1.1" fill="#000"/><rect x="37.00" y="47.00" width="4" height="1.1" fill="#000"/><rect x="37.00" y="83.00" width="4" height="1.1" fill="#000"/><rect x="37.00" y="120.00" width="4" height="1.1" fill="#000"/><rect x="37.00" y="157.00" width="4" height="1.1" fill="#000"/><rect x="37.00" y="194.00" width="4" height="1.1" fill="#000"/><rect x="41.00" y="231.00" width="1.2" height="5" fill="#000"/><rect x="91.00" y="231.00" width="1.2" height="5" fill="#000"/><rect x="141.00" y="231.00" width="1.2" height="5" fill="#000"/><rect x="190.00" y="231.00" width="1.2" height="5" fill="#000"/><rect x="240.00" y="231.00" width="1.2" height="5" fill="#000"/><rect x="290.00" y="231.00" width="1.2" height="5" fill="#000"/><rect x="339.00" y="231.00" width="1.2" height="5" fill="#000"/><rect x="389.00" y="231.00" width="1.2" height="5" fill="#000"/><rect x="439.00" y="231.00" width="1.2" height="5" fill="#000"/><rect x="489.00" y="231.00" width="1.2" height="5" fill="#000"/><rect x="538.00" y="231.00" width="1.2" height="5" fill="#000"/><rect x="588.00" y="231.00" width="1.2" height="5" fill="#000"/><rect x="638.00" y="231.00" width="1.2" height="5" fill="#000"/><rect x="687.00" y="231.00" width="1.2" height="5" fill="#000"/><rect x="727.00" y="231.00" width="1.2" height="5" fill="#000"/><text transform="translate(20.00,14.20) scale(1,1.1)" text-anchor="middle" font-size="13" fill="#222">0.6</text><text transform="translate(20.00,51.03) scale(1,1.1)" text-anchor="middle" font-size="13" fill="#222">0.5</text><text transform="translate(20.00,87.87) scale(1,1.1)" text-anchor="middle" font-size="13" fill="#222">0.4</text><text transform="translate(20.00,124.70) scale(1,1.1)" text-anchor="middle" font-size="13" fill="#222">0.3</text><text transform="translate(20.00,161.53) scale(1,1.1)" text-anchor="middle" font-size="13" fill="#222">0.2</text><text transform="translate(20.00,198.37) scale(1,1.1)" text-anchor="middle" font-size="13" fill="#222">0.1</text><text transform="translate(20.00,235.20) scale(1,1.1)" text-anchor="middle" font-size="13" fill="#222">0</text><text transform="translate(42.50,251.00) scale(1,1.1)" text-anchor="middle" font-size="13" fill="#222">2022-09-10</text><text transform="translate(42.50,265.90) scale(1,1.1)" text-anchor="middle" font-size="13" fill="#222">07:11:00</text><text transform="translate(141.94,251.00) scale(1,1.1)" text-anchor="middle" font-size="13" fill="#222">2022-09-10</text><text transform="translate(141.94,265.90) scale(1,1.1)" text-anchor="middle" font-size="13" fill="#222">07:21:00</text><text transform="translate(241.38,251.00) scale(1,1.1)" text-anchor="middle" font-size="13" fill="#222">2022-09-10</text><text transform="translate(241.38,265.90) scale(1,1.1)" text-anchor="middle" font-size="13" fill="#222">07:31:00</text><text transform="translate(340.83,251.00) scale(1,1.1)" text-anchor="middle" font-size="13" fill="#222">2022-09-10</text><text transform="translate(340.83,265.90) scale(1,1.1)" text-anchor="middle" font-size="13" fill="#222">07:41:00</text><text transform="translate(440.27,251.00) scale(1,1.1)" text-anchor="middle" font-size="13" fill="#222">2022-09-10</text><text transform="translate(440.27,265.90) scale(1,1.1)" text-anchor="middle" font-size="13" fill="#222">07:51:00</text><text transform="translate(539.71,251.00) scale(1,1.1)" text-anchor="middle" font-size="13" fill="#222">2022-09-10</text><text transform="translate(539.71,265.90) scale(1,1.1)" text-anchor="middle" font-size="13" fill="#222">08:01:00</text><text transform="translate(639.15,251.00) scale(1,1.1)" text-anchor="middle" font-size="13" fill="#222">2022-09-10</text><text transform="translate(639.15,265.90) scale(1,1.1)" text-anchor="middle" font-size="13" fill="#222">08:11:00</text><text transform="translate(728.80,251.00) scale(1,1.1)" text-anchor="middle" font-size="13" fill="#222">2022-09-10</text><text transform="translate(728.80,265.90) scale(1,1.1)" text-anchor="middle" font-size="13" fill="#222">08:20:02</text></svg>
<div class="r" style="left:372px;top:442px;width:738px;height:34px;background:#f5f5f5;"></div>
<div class="r" style="left:372px;top:476px;width:738px;height:281px;background:#fff;border:1px solid #cfcfcf;"></div>
<div class="t" style="left:382.30px;top:448.50px;font-size:15px;color:#3588c8;font-weight:normal;transform:scaleY(1.06);">Server load</div>
<div class="r" style="left:962.5px;top:447.3px;width:114.5px;height:24.0px;background:#fff;border:1px solid #d8d8d8;border-radius:3px;"></div>
<svg class="r" style="left:970.5px;top:455.0px;" width="10" height="10" viewBox="0 0 10 10"><circle cx="5" cy="5" r="5" fill="#94ae0a"/></svg>
<div class="t" style="left:986.70px;top:450.05px;font-size:13px;color:#333;font-weight:normal;transform:scaleY(1.09);">Load average</div>
<svg class="r" style="left:1084px;top:451.2px;" width="16" height="16" viewBox="0 0 16 16"><circle cx="8" cy="8" r="7.4" fill="none" stroke="#dde6ee" stroke-width="1"/><path d="M1.5,8 H14.5" stroke="#dde6ee" stroke-width="1"/></svg>
<svg style="position:absolute;left:373px;top:477px;overflow:hidden;font-family:'Liberation Sans', sans-serif" width="736" height="279"><rect x="66.50" y="10.00" width="661.30" height="1" fill="#dddddd"/><rect x="66.50" y="37.00" width="661.30" height="1" fill="#dddddd"/><rect x="66.50" y="65.00" width="661.30" height="1" fill="#dddddd"/><rect x="66.50" y="93.00" width="661.30" height="1" fill="#dddddd"/><rect x="66.50" y="120.00" width="661.30" height="1" fill="#dddddd"/><rect x="66.50" y="148.00" width="661.30" height="1" fill="#dddddd"/><rect x="66.50" y="176.00" width="661.30" height="1" fill="#dddddd"/><rect x="66.50" y="203.00" width="661.30" height="1" fill="#dddddd"/><rect x="114.00" y="10.00" width="1" height="221.10" fill="#dddddd"/><rect x="162.00" y="10.00" width="1" height="221.10" fill="#dddddd"/><rect x="210.00" y="10.00" width="1" height="221.10" fill="#dddddd"/><rect x="258.00" y="10.00" width="1" height="221.10" fill="#dddddd"/><rect x="306.00" y="10.00" width="1" height="221.10" fill="#dddddd"/><rect x="354.00" y="10.00" width="1" height="221.10" fill="#dddddd"/><rect x="402.00" y="10.00" width="1" height="221.10" fill="#dddddd"/><rect x="450.00" y="10.00" width="1" height="221.10" fill="#dddddd"/><rect x="497.00" y="10.00" width="1" height="221.10" fill="#dddddd"/><rect x="545.00" y="10.00" width="1" height="221.10" fill="#dddddd"/><rect x="593.00" y="10.00" width="1" height="221.10" fill="#dddddd"/><rect x="641.00" y="10.00" width="1" height="221.10" fill="#dddddd"/><rect x="689.00" y="10.00" width="1" height="221.10" fill="#dddddd"/><rect x="727.00" y="10.30" width="1" height="221.10" fill="#dddddd"/><polygon points="718.50,231.40 718.50,93.50 727.80,28.70 727.80,231.40" fill="#c0cf6f"/><polyline points="718.50,93.50 727.80,28.70" fill="none" stroke="#7f8f45" stroke-width="1"/><rect x="66.00" y="10.00" width="1.2" height="222.10" fill="#000"/><rect x="62.00" y="231.00" width="666.30" height="1.2" fill="#000"/><rect x="62.00" y="10.00" width="4" height="1.1" fill="#000"/><rect x="62.00" y="37.00" width="4" height="1.1" fill="#000"/><rect x="62.00" y="65.00" width="4" height="1.1" fill="#000"/><rect x="62.00" y="93.00" width="4" height="1.1" fill="#000"/><rect x="62.00" y="120.00" width="4" height="1.1" fill="#000"/><rect x="62.00" y="148.00" width="4" height="1.1" fill="#000"/><rect x="62.00" y="176.00" width="4" height="1.1" fill="#000"/><rect x="62.00" y="203.00" width="4" height="1.1" fill="#000"/><rect x="66.00" y="231.00" width="1.2" height="5" fill="#000"/><rect x="114.00" y="231.00" width="1.2" height="5" fill="#000"/><rect x="162.00" y="231.00" width="1.2" height="5" fill="#000"/><rect x="210.00" y="231.00" width="1.2" height="5" fill="#000"/><rect x="258.00" y="231.00" width="1.2" height="5" fill="#000"/><rect x="306.00" y="231.00" width="1.2" height="5" fill="#000"/><rect x="354.00" y="231.00" width="1.2" height="5" fill="#000"/><rect x="402.00" y="231.00" width="1.2" height="5" fill="#000"/><rect x="450.00" y="231.00" width="1.2" height="5" fill="#000"/><rect x="497.00" y="231.00" width="1.2" height="5" fill="#000"/><rect x="545.00" y="231.00" width="1.2" height="5" fill="#000"/><rect x="593.00" y="231.00" width="1.2" height="5" fill="#000"/><rect x="641.00" y="231.00" width="1.2" height="5" fill="#000"/><rect x="689.00" y="231.00" width="1.2" height="5" fill="#000"/><rect x="728.00" y="231.00" width="1.2" height="5" fill="#000"/><text transform="translate(43.00,14.20) scale(1,1.1)" text-anchor="middle" font-size="13" fill="#222">0.16</text><text transform="translate(43.00,41.84) scale(1,1.1)" text-anchor="middle" font-size="13" fill="#222">0.14</text><text transform="translate(43.00,69.48) scale(1,1.1)" text-anchor="middle" font-size="13" fill="#222">0.12</text><text transform="translate(43.00,97.11) scale(1,1.1)" text-anchor="middle" font-size="13" fill="#222">0.1</text><text transform="translate(43.00,124.75) scale(1,1.1)" text-anchor="middle" font-size="13" fill="#222">0.08</text><text transform="translate(43.00,152.39) scale(1,1.1)" text-anchor="middle" font-size="13" fill="#222">0.06</text><text transform="translate(43.00,180.03) scale(1,1.1)" text-anchor="middle" font-size="13" fill="#222">0.04</text><text transform="translate(43.00,207.66) scale(1,1.1)" text-anchor="middle" font-size="13" fill="#222">0.02</text><text transform="translate(43.00,235.30) scale(1,1.1)" text-anchor="middle" font-size="13" fill="#222">0</text><text transform="translate(67.70,250.90) scale(1,1.1)" text-anchor="middle" font-size="13" fill="#222">2022-09-10</text><text transform="translate(67.70,265.70) scale(1,1.1)" text-anchor="middle" font-size="13" fill="#222">07:11:00</text><text transform="translate(163.52,250.90) scale(1,1.1)" text-anchor="middle" font-size="13" fill="#222">2022-09-10</text><text transform="translate(163.52,265.70) scale(1,1.1)" text-anchor="middle" font-size="13" fill="#222">07:21:00</text><text transform="translate(259.34,250.90) scale(1,1.1)" text-anchor="middle" font-size="13" fill="#222">2022-09-10</text><text transform="translate(259.34,265.70) scale(1,1.1)" text-anchor="middle" font-size="13" fill="#222">07:31:00</text><text transform="translate(355.16,250.90) scale(1,1.1)" text-anchor="middle" font-size="13" fill="#222">2022-09-10</text><text transform="translate(355.16,265.70) scale(1,1.1)" text-anchor="middle" font-size="13" fill="#222">07:41:00</text><text transform="translate(450.98,250.90) scale(1,1.1)" text-anchor="middle" font-size="13" fill="#222">2022-09-10</text><text transform="translate(450.98,265.70) scale(1,1.1)" text-anchor="middle" font-size="13" fill="#222">07:51:00</text><text transform="translate(546.80,250.90) scale(1,1.1)" text-anchor="middle" font-size="13" fill="#222">2022-09-10</text><text transform="translate(546.80,265.70) scale(1,1.1)" text-anchor="middle" font-size="13" fill="#222">08:01:00</text><text transform="translate(642.62,250.90) scale(1,1.1)" text-anchor="middle" font-size="13" fill="#222">2022-09-10</text><text transform="translate(642.62,265.70) scale(1,1.1)" text-anchor="middle" font-size="13" fill="#222">08:11:00</text><text transform="translate(729.00,250.90) scale(1,1.1)" text-anchor="middle" font-size="13" fill="#222">2022-09-10</text><text transform="translate(729.00,265.70) scale(1,1.1)" text-anchor="middle" font-size="13" fill="#222">08:20:02</text><text x="0" y="0" transform="translate(26.20,121.00) rotate(-90)" text-anchor="middle" font-size="16" fill="#222">Load average</text></svg>
<div class="r" style="left:1120px;top:442px;width:738px;height:34px;background:#f5f5f5;"></div>
<div class="r" style="left:1120px;top:476px;width:738px;height:281px;background:#fff;border:1px solid #cfcfcf;"></div>
<div class="t" style="left:1130.30px;top:448.50px;font-size:15px;color:#3588c8;font-weight:normal;transform:scaleY(1.06);">Memory usage</div>
<div class="r" style="left:1660px;top:447.5px;width:165.5px;height:24.0px;background:#fff;border:1px solid #d8d8d8;border-radius:3px;"></div>
<div class="r" style="left:1722.5px;top:448.5px;width:1.0px;height:22.0px;background:#dedede;"></div>
<svg class="r" style="left:1668px;top:455.2px;" width="10" height="10" viewBox="0 0 10 10"><circle cx="5" cy="5" r="5" fill="#94ae0a"/></svg>
<div class="t" style="left:1684.20px;top:450.25px;font-size:13px;color:#333;font-weight:normal;transform:scaleY(1.09);">Total</div>
<svg class="r" style="left:1731px;top:455.2px;" width="10" height="10" viewBox="0 0 10 10"><circle cx="5" cy="5" r="5" fill="#115fa6"/></svg>
<div class="t" style="left:1747.20px;top:450.25px;font-size:13px;color:#333;font-weight:normal;transform:scaleY(1.09);">RAM usage</div>
<svg class="r" style="left:1832px;top:451.2px;" width="16" height="16" viewBox="0 0 16 16"><circle cx="8" cy="8" r="7.4" fill="none" stroke="#dde6ee" stroke-width="1"/><path d="M1.5,8 H14.5" stroke="#dde6ee" stroke-width="1"/></svg>
<svg style="position:absolute;left:1121px;top:477px;overflow:hidden;font-family:'Liberation Sans', sans-serif" width="736" height="279"><rect x="68.40" y="10.00" width="659.10" height="1" fill="#dddddd"/><rect x="68.40" y="47.00" width="659.10" height="1" fill="#dddddd"/><rect x="68.40" y="84.00" width="659.10" height="1" fill="#dddddd"/><rect x="68.40" y="120.00" width="659.10" height="1" fill="#dddddd"/><rect x="68.40" y="157.00" width="659.10" height="1" fill="#dddddd"/><rect x="68.40" y="194.00" width="659.10" height="1" fill="#dddddd"/><rect x="116.00" y="10.00" width="1" height="220.90" fill="#dddddd"/><rect x="164.00" y="10.00" width="1" height="220.90" fill="#dddddd"/><rect x="211.00" y="10.00" width="1" height="220.90" fill="#dddddd"/><rect x="259.00" y="10.00" width="1" height="220.90" fill="#dddddd"/><rect x="307.00" y="10.00" width="1" height="220.90" fill="#dddddd"/><rect x="355.00" y="10.00" width="1" height="220.90" fill="#dddddd"/><rect x="402.00" y="10.00" width="1" height="220.90" fill="#dddddd"/><rect x="450.00" y="10.00" width="1" height="220.90" fill="#dddddd"/><rect x="498.00" y="10.00" width="1" height="220.90" fill="#dddddd"/><rect x="546.00" y="10.00" width="1" height="220.90" fill="#dddddd"/><rect x="593.00" y="10.00" width="1" height="220.90" fill="#dddddd"/><rect x="641.00" y="10.00" width="1" height="220.90" fill="#dddddd"/><rect x="689.00" y="10.00" width="1" height="220.90" fill="#dddddd"/><rect x="727.00" y="10.50" width="1" height="220.90" fill="#dddddd"/><polygon points="718.40,231.40 718.40,20.40 727.60,20.40 727.60,231.40" fill="#c0cf6f"/><polyline points="718.40,20.40 727.60,20.40" fill="none" stroke="#7f8f45" stroke-width="1.3"/><polygon points="718.40,231.40 718.40,211.60 727.60,211.20 727.60,231.40" fill="#5a8f8c"/><polyline points="718.40,211.60 727.60,211.20" fill="none" stroke="#3f6e62" stroke-width="1.3"/><rect x="68.00" y="10.00" width="1.2" height="221.90" fill="#000"/><rect x="64.00" y="231.00" width="664.10" height="1.2" fill="#000"/><rect x="64.00" y="10.00" width="4" height="1.1" fill="#000"/><rect x="64.00" y="47.00" width="4" height="1.1" fill="#000"/><rect x="64.00" y="84.00" width="4" height="1.1" fill="#000"/><rect x="64.00" y="120.00" width="4" height="1.1" fill="#000"/><rect x="64.00" y="157.00" width="4" height="1.1" fill="#000"/><rect x="64.00" y="194.00" width="4" height="1.1" fill="#000"/><rect x="68.00" y="231.00" width="1.2" height="5" fill="#000"/><rect x="116.00" y="231.00" width="1.2" height="5" fill="#000"/><rect x="164.00" y="231.00" width="1.2" height="5" fill="#000"/><rect x="211.00" y="231.00" width="1.2" height="5" fill="#000"/><rect x="259.00" y="231.00" width="1.2" height="5" fill="#000"/><rect x="307.00" y="231.00" width="1.2" height="5" fill="#000"/><rect x="355.00" y="231.00" width="1.2" height="5" fill="#000"/><rect x="402.00" y="231.00" width="1.2" height="5" fill="#000"/><rect x="450.00" y="231.00" width="1.2" height="5" fill="#000"/><rect x="498.00" y="231.00" width="1.2" height="5" fill="#000"/><rect x="546.00" y="231.00" width="1.2" height="5" fill="#000"/><rect x="593.00" y="231.00" width="1.2" height="5" fill="#000"/><rect x="641.00" y="231.00" width="1.2" height="5" fill="#000"/><rect x="689.00" y="231.00" width="1.2" height="5" fill="#000"/><rect x="727.00" y="231.00" width="1.2" height="5" fill="#000"/><text transform="translate(46.50,14.40) scale(1,1.1)" text-anchor="middle" font-size="13" fill="#222">12 Gi</text><text transform="translate(46.50,51.22) scale(1,1.1)" text-anchor="middle" font-size="13" fill="#222">10 Gi</text><text transform="translate(46.50,88.03) scale(1,1.1)" text-anchor="middle" font-size="13" fill="#222">8 Gi</text><text transform="translate(46.50,124.85) scale(1,1.1)" text-anchor="middle" font-size="13" fill="#222">6 Gi</text><text transform="translate(46.50,161.67) scale(1,1.1)" text-anchor="middle" font-size="13" fill="#222">4 Gi</text><text transform="translate(46.50,198.48) scale(1,1.1)" text-anchor="middle" font-size="13" fill="#222">2 Gi</text><text transform="translate(46.50,235.30) scale(1,1.1)" text-anchor="middle" font-size="13" fill="#222">0 i</text><text transform="translate(69.60,250.90) scale(1,1.1)" text-anchor="middle" font-size="13" fill="#222">2022-09-10</text><text transform="translate(69.60,265.70) scale(1,1.1)" text-anchor="middle" font-size="13" fill="#222">07:11:00</text><text transform="translate(165.10,250.90) scale(1,1.1)" text-anchor="middle" font-size="13" fill="#222">2022-09-10</text><text transform="translate(165.10,265.70) scale(1,1.1)" text-anchor="middle" font-size="13" fill="#222">07:21:00</text><text transform="translate(260.60,250.90) scale(1,1.1)" text-anchor="middle" font-size="13" fill="#222">2022-09-10</text><text transform="translate(260.60,265.70) scale(1,1.1)" text-anchor="middle" font-size="13" fill="#222">07:31:00</text><text transform="translate(356.10,250.90) scale(1,1.1)" text-anchor="middle" font-size="13" fill="#222">2022-09-10</text><text transform="translate(356.10,265.70) scale(1,1.1)" text-anchor="middle" font-size="13" fill="#222">07:41:00</text><text transform="translate(451.60,250.90) scale(1,1.1)" text-anchor="middle" font-size="13" fill="#222">2022-09-10</text><text transform="translate(451.60,265.70) scale(1,1.1)" text-anchor="middle" font-size="13" fill="#222">07:51:00</text><text transform="translate(547.10,250.90) scale(1,1.1)" text-anchor="middle" font-size="13" fill="#222">2022-09-10</text><text transform="translate(547.10,265.70) scale(1,1.1)" text-anchor="middle" font-size="13" fill="#222">08:01:00</text><text transform="translate(642.61,250.90) scale(1,1.1)" text-anchor="middle" font-size="13" fill="#222">2022-09-10</text><text transform="translate(642.61,265.70) scale(1,1.1)" text-anchor="middle" font-size="13" fill="#222">08:11:00</text><text transform="translate(728.70,250.90) scale(1,1.1)" text-anchor="middle" font-size="13" fill="#222">2022-09-10</text><text transform="translate(728.70,265.70) scale(1,1.1)" text-anchor="middle" font-size="13" fill="#222">08:20:02</text><text x="0" y="0" transform="translate(25.70,121.00) rotate(-90)" text-anchor="middle" font-size="16" fill="#222">Bytes</text></svg>
<div class="r" style="left:372px;top:767px;width:738px;height:34px;background:#f5f5f5;"></div>
<div class="r" style="left:372px;top:801px;width:738px;height:281px;background:#fff;border:1px solid #cfcfcf;"></div>
<div class="t" style="left:382.30px;top:773.50px;font-size:15px;color:#3588c8;font-weight:normal;transform:scaleY(1.06);">Network traffic</div>
<div class="r" style="left:943.5px;top:773px;width:134.5px;height:24px;background:#fff;border:1px solid #d8d8d8;border-radius:3px;"></div>
<div class="r" style="left:1006.5px;top:774px;width:1.0px;height:22px;background:#dedede;"></div>
<svg class="r" style="left:951.5px;top:780.7px;" width="10" height="10" viewBox="0 0 10 10"><circle cx="5" cy="5" r="5" fill="#94ae0a"/></svg>
<div class="t" style="left:967.70px;top:775.75px;font-size:13px;color:#333;font-weight:normal;transform:scaleY(1.09);">netin</div>
<svg class="r" style="left:1014px;top:780.7px;" width="10" height="10" viewBox="0 0 10 10"><circle cx="5" cy="5" r="5" fill="#115fa6"/></svg>
<div class="t" style="left:1030.20px;top:775.75px;font-size:13px;color:#333;font-weight:normal;transform:scaleY(1.09);">netout</div>
<svg class="r" style="left:1084px;top:776.2px;" width="16" height="16" viewBox="0 0 16 16"><circle cx="8" cy="8" r="7.4" fill="none" stroke="#dde6ee" stroke-width="1"/><path d="M1.5,8 H14.5" stroke="#dde6ee" stroke-width="1"/></svg>
<svg style="position:absolute;left:373px;top:802px;overflow:hidden;font-family:'Liberation Sans', sans-serif" width="736" height="279"><rect x="41.20" y="10.00" width="686.30" height="1" fill="#dddddd"/><rect x="41.20" y="37.00" width="686.30" height="1" fill="#dddddd"/><rect x="41.20" y="65.00" width="686.30" height="1" fill="#dddddd"/><rect x="41.20" y="92.00" width="686.30" height="1" fill="#dddddd"/><rect x="41.20" y="120.00" width="686.30" height="1" fill="#dddddd"/><rect x="41.20" y="147.00" width="686.30" height="1" fill="#dddddd"/><rect x="41.20" y="175.00" width="686.30" height="1" fill="#dddddd"/><rect x="41.20" y="203.00" width="686.30" height="1" fill="#dddddd"/><rect x="91.00" y="10.00" width="1" height="220.60" fill="#dddddd"/><rect x="140.00" y="10.00" width="1" height="220.60" fill="#dddddd"/><rect x="190.00" y="10.00" width="1" height="220.60" fill="#dddddd"/><rect x="240.00" y="10.00" width="1" height="220.60" fill="#dddddd"/><rect x="290.00" y="10.00" width="1" height="220.60" fill="#dddddd"/><rect x="339.00" y="10.00" width="1" height="220.60" fill="#dddddd"/><rect x="389.00" y="10.00" width="1" height="220.60" fill="#dddddd"/><rect x="439.00" y="10.00" width="1" height="220.60" fill="#dddddd"/><rect x="488.00" y="10.00" width="1" height="220.60" fill="#dddddd"/><rect x="538.00" y="10.00" width="1" height="220.60" fill="#dddddd"/><rect x="588.00" y="10.00" width="1" height="220.60" fill="#dddddd"/><rect x="638.00" y="10.00" width="1" height="220.60" fill="#dddddd"/><rect x="687.00" y="10.00" width="1" height="220.60" fill="#dddddd"/><rect x="727.00" y="10.10" width="1" height="220.60" fill="#dddddd"/><polygon points="718.10,230.70 727.60,35.60 727.60,230.70" fill="#c0cf6f"/><polyline points="718.10,230.70 727.60,35.60" fill="none" stroke="#7f8f45" stroke-width="1"/><polygon points="718.10,230.70 727.60,228.80 727.60,230.70" fill="#4a7a80"/><rect x="41.00" y="10.00" width="1.2" height="221.60" fill="#000"/><rect x="37.00" y="230.00" width="691.30" height="1.2" fill="#000"/><rect x="37.00" y="10.00" width="4" height="1.1" fill="#000"/><rect x="37.00" y="37.00" width="4" height="1.1" fill="#000"/><rect x="37.00" y="65.00" width="4" height="1.1" fill="#000"/><rect x="37.00" y="92.00" width="4" height="1.1" fill="#000"/><rect x="37.00" y="120.00" width="4" height="1.1" fill="#000"/><rect x="37.00" y="147.00" width="4" height="1.1" fill="#000"/><rect x="37.00" y="175.00" width="4" height="1.1" fill="#000"/><rect x="37.00" y="203.00" width="4" height="1.1" fill="#000"/><rect x="41.00" y="230.00" width="1.2" height="5" fill="#000"/><rect x="91.00" y="230.00" width="1.2" height="5" fill="#000"/><rect x="140.00" y="230.00" width="1.2" height="5" fill="#000"/><rect x="190.00" y="230.00" width="1.2" height="5" fill="#000"/><rect x="240.00" y="230.00" width="1.2" height="5" fill="#000"/><rect x="290.00" y="230.00" width="1.2" height="5" fill="#000"/><rect x="339.00" y="230.00" width="1.2" height="5" fill="#000"/><rect x="389.00" y="230.00" width="1.2" height="5" fill="#000"/><rect x="439.00" y="230.00" width="1.2" height="5" fill="#000"/><rect x="488.00" y="230.00" width="1.2" height="5" fill="#000"/><rect x="538.00" y="230.00" width="1.2" height="5" fill="#000"/><rect x="588.00" y="230.00" width="1.2" height="5" fill="#000"/><rect x="638.00" y="230.00" width="1.2" height="5" fill="#000"/><rect x="687.00" y="230.00" width="1.2" height="5" fill="#000"/><rect x="727.00" y="230.00" width="1.2" height="5" fill="#000"/><text transform="translate(21.00,14.00) scale(1,1.1)" text-anchor="middle" font-size="13" fill="#222">8 M</text><text transform="translate(21.00,41.58) scale(1,1.1)" text-anchor="middle" font-size="13" fill="#222">7 M</text><text transform="translate(21.00,69.15) scale(1,1.1)" text-anchor="middle" font-size="13" fill="#222">6 M</text><text transform="translate(21.00,96.73) scale(1,1.1)" text-anchor="middle" font-size="13" fill="#222">5 M</text><text transform="translate(21.00,124.30) scale(1,1.1)" text-anchor="middle" font-size="13" fill="#222">4 M</text><text transform="translate(21.00,151.88) scale(1,1.1)" text-anchor="middle" font-size="13" fill="#222">3 M</text><text transform="translate(21.00,179.45) scale(1,1.1)" text-anchor="middle" font-size="13" fill="#222">2 M</text><text transform="translate(21.00,207.03) scale(1,1.1)" text-anchor="middle" font-size="13" fill="#222">1 M</text><text transform="translate(21.00,234.60) scale(1,1.1)" text-anchor="middle" font-size="13" fill="#222">0</text><text transform="translate(42.40,251.20) scale(1,1.1)" text-anchor="middle" font-size="13" fill="#222">2022-09-10</text><text transform="translate(42.40,265.60) scale(1,1.1)" text-anchor="middle" font-size="13" fill="#222">07:11:00</text><text transform="translate(141.84,251.20) scale(1,1.1)" text-anchor="middle" font-size="13" fill="#222">2022-09-10</text><text transform="translate(141.84,265.60) scale(1,1.1)" text-anchor="middle" font-size="13" fill="#222">07:21:00</text><text transform="translate(241.28,251.20) scale(1,1.1)" text-anchor="middle" font-size="13" fill="#222">2022-09-10</text><text transform="translate(241.28,265.60) scale(1,1.1)" text-anchor="middle" font-size="13" fill="#222">07:31:00</text><text transform="translate(340.73,251.20) scale(1,1.1)" text-anchor="middle" font-size="13" fill="#222">2022-09-10</text><text transform="translate(340.73,265.60) scale(1,1.1)" text-anchor="middle" font-size="13" fill="#222">07:41:00</text><text transform="translate(440.17,251.20) scale(1,1.1)" text-anchor="middle" font-size="13" fill="#222">2022-09-10</text><text transform="translate(440.17,265.60) scale(1,1.1)" text-anchor="middle" font-size="13" fill="#222">07:51:00</text><text transform="translate(539.61,251.20) scale(1,1.1)" text-anchor="middle" font-size="13" fill="#222">2022-09-10</text><text transform="translate(539.61,265.60) scale(1,1.1)" text-anchor="middle" font-size="13" fill="#222">08:01:00</text><text transform="translate(639.05,251.20) scale(1,1.1)" text-anchor="middle" font-size="13" fill="#222">2022-09-10</text><text transform="translate(639.05,265.60) scale(1,1.1)" text-anchor="middle" font-size="13" fill="#222">08:11:00</text><text transform="translate(728.70,251.20) scale(1,1.1)" text-anchor="middle" font-size="13" fill="#222">2022-09-10</text><text transform="translate(728.70,265.60) scale(1,1.1)" text-anchor="middle" font-size="13" fill="#222">08:20:02</text></svg>
</body></html>
